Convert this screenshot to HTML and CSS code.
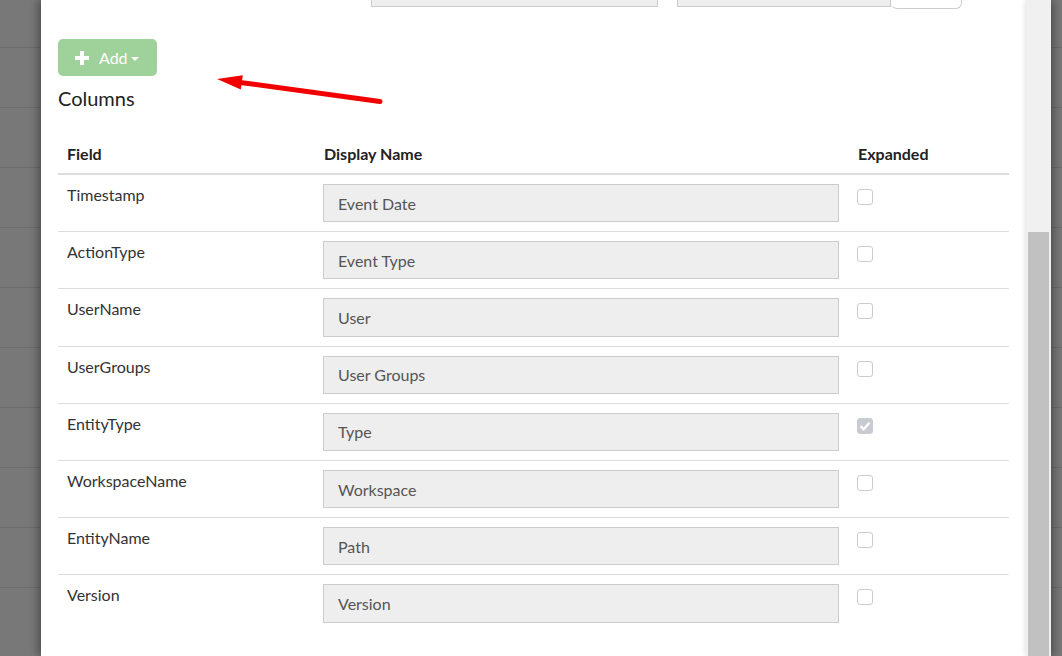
FILE: index.html
```html
<!DOCTYPE html>
<html lang="en">
<head>
	<meta charset="UTF-8">
	<title>Columns</title>
	<link rel="stylesheet" href="styles.css">
</head>
<body>
	<div class="page">
		<div class="modal">
			<div class="modal-body">
				<div class="filter-row">
					<div class="filter-input wide"></div>
					<div class="filter-group">
						<div class="filter-input narrow"></div>
						<div class="filter-btn"></div>
					</div>
				</div>

				<button class="btn-add" disabled>
					<svg class="plus" width="14" height="14" viewBox="0 0 14 14">
						<rect x="5" y="0" width="4" height="14" fill="#fff"/>
						<rect x="0" y="5" width="14" height="4" fill="#fff"/>
					</svg>
					<span class="add-label">Add</span>
					<span class="caret"></span>
				</button>

				<h4 class="section-title">Columns</h4>

				<table class="columns">
					<colgroup>
						<col class="c-field">
						<col class="c-name">
						<col class="c-exp">
					</colgroup>
					<thead>
						<tr>
							<th>Field</th>
							<th>Display Name</th>
							<th>Expanded</th>
						</tr>
					</thead>
					<tbody>
						<tr>
							<td>Timestamp</td>
							<td><div class="name-input">Event Date</div></td>
							<td><span class="check"></span></td>
						</tr>
						<tr>
							<td>ActionType</td>
							<td><div class="name-input">Event Type</div></td>
							<td><span class="check"></span></td>
						</tr>
						<tr>
							<td>UserName</td>
							<td><div class="name-input">User</div></td>
							<td><span class="check"></span></td>
						</tr>
						<tr>
							<td>UserGroups</td>
							<td><div class="name-input">User Groups</div></td>
							<td><span class="check"></span></td>
						</tr>
						<tr>
							<td>EntityType</td>
							<td><div class="name-input">Type</div></td>
							<td>
								<span class="check checked">
									<svg width="12" height="10" viewBox="0 0 12 10">
										<path d="M1.5 5.2 L4.6 8.2 L10.5 1.8" fill="none" stroke="#fff" stroke-width="2.4"/>
									</svg>
								</span>
							</td>
						</tr>
						<tr>
							<td>WorkspaceName</td>
							<td><div class="name-input">Workspace</div></td>
							<td><span class="check"></span></td>
						</tr>
						<tr>
							<td>EntityName</td>
							<td><div class="name-input">Path</div></td>
							<td><span class="check"></span></td>
						</tr>
						<tr>
							<td>Version</td>
							<td><div class="name-input">Version</div></td>
							<td><span class="check"></span></td>
						</tr>
					</tbody>
				</table>
			</div>
		</div>
		<div class="scrollbar">
			<div class="thumb"></div>
		</div>
	</div>

	<!-- annotation arrow -->
	<svg class="arrow" width="180" height="40" viewBox="0 0 180 40">
		<line x1="30" y1="14.4" x2="170" y2="33.5" stroke="#f20000" stroke-width="5" stroke-linecap="round"/>
		<polygon points="7,11 32.8,7.3 30.8,21.5" fill="#f20000"/>
	</svg>
</body>
</html>
```

FILE: styles.css
```css
*{
	margin: 0;
	padding: 0;
	box-sizing: border-box;
}
html, body{
	height: 656px;
	overflow: hidden;
}
body{
	font-family: Lato, "Open Sans", "Liberation Sans", sans-serif;
	font-size: 16px;
	color: #333;
	background: repeating-linear-gradient(to bottom, #787878 0, #787878 59px, #6b6b6b 59px, #6b6b6b 60px);
	background-position: 0 -12px;
	position: relative;
}
.page{
	display: flex;
	padding-left: 41px;
	height: 656px;
}
.modal{
	width: 985px;
	height: 656px;
	background: #fff;
	overflow: hidden;
	box-shadow: -3px 0 8px rgba(0, 0, 0, .35);
}
.modal-body{
	padding: 0 17px;
}
.scrollbar{
	width: 25px;
	height: 656px;
	background: #f0f0f0;
	padding: 232px 2px 0 2px;
	display: flex;
	flex-direction: column;
	box-shadow: 3px 0 8px rgba(0, 0, 0, .35);
}
.scrollbar .thumb{
	flex: 1;
	background: #c1c1c1;
}

/* partially scrolled filter row */
.filter-row{
	display: flex;
	align-items: flex-start;
	margin-top: -27px;
	padding-left: 313px;
	gap: 19px;
}
.filter-input{
	height: 34px;
	background: #eee;
	border: 1px solid #ccc;
}
.filter-input.wide{
	width: 287px;
}
.filter-input.narrow{
	width: 214px;
}
.filter-group{
	display: flex;
	align-items: flex-start;
}
.filter-btn{
	width: 71px;
	height: 36px;
	background: #fff;
	border: 1px solid #ccc;
	border-left: none;
	border-radius: 0 0 6px 6px;
}

.btn-add{
	display: flex;
	align-items: center;
	margin-top: 30px;
	width: 99px;
	height: 37px;
	padding-left: 17px;
	background: #9fd29a;
	border: none;
	border-radius: 5px;
	color: #fff;
	font-family: Lato, "Open Sans", "Liberation Sans", sans-serif;
	font-size: 16px;
}
.btn-add .plus{
	display: block;
}
.add-label{
	margin-left: 10px;
}
.caret{
	margin-left: 3px;
	margin-top: 2px;
	width: 0;
	height: 0;
	border-left: 4px solid transparent;
	border-right: 4px solid transparent;
	border-top: 4px solid #fff;
}

.section-title{
	margin-top: 11px;
	margin-bottom: 25px;
	font-size: 20px;
	font-weight: 400;
	line-height: 22px;
	color: #222;
}

.columns{
	width: 951px;
	table-layout: fixed;
	border-collapse: collapse;
}
.c-field{
	width: 257px;
}
.c-name{
	width: 535px;
}
.c-exp{
	width: 159px;
}
.columns th{
	text-align: left;
	font-weight: 700;
	color: #222;
	line-height: 21px;
	padding: 9px 8px 9px 9px;
	border-bottom: 2px solid #ddd;
}
.columns th:last-child{
	padding-left: 8px;
}
.columns td{
	vertical-align: top;
	line-height: 21px;
	padding: 9px 8px;
}
.columns td:first-child{
	padding-left: 9px;
}
.columns tbody tr + tr td{
	border-top: 1px solid #ddd;
}
.name-input{
	width: 516px;
	height: 38.2px;
	display: flex;
	align-items: center;
	padding: 0 14px;
	background: #eee;
	border: 1px solid #ccc;
	color: #555;
}
.check{
	display: flex;
	align-items: center;
	justify-content: center;
	width: 16px;
	height: 16px;
	margin-top: 5px;
	margin-left: -1px;
	border: 1px solid #c9ccd3;
	border-radius: 3px;
	background: #fff;
}
.check.checked{
	background: #c8cbd2;
	border-color: #c8cbd2;
}

.arrow{
	position: absolute;
	left: 210px;
	top: 68px;
}
```
